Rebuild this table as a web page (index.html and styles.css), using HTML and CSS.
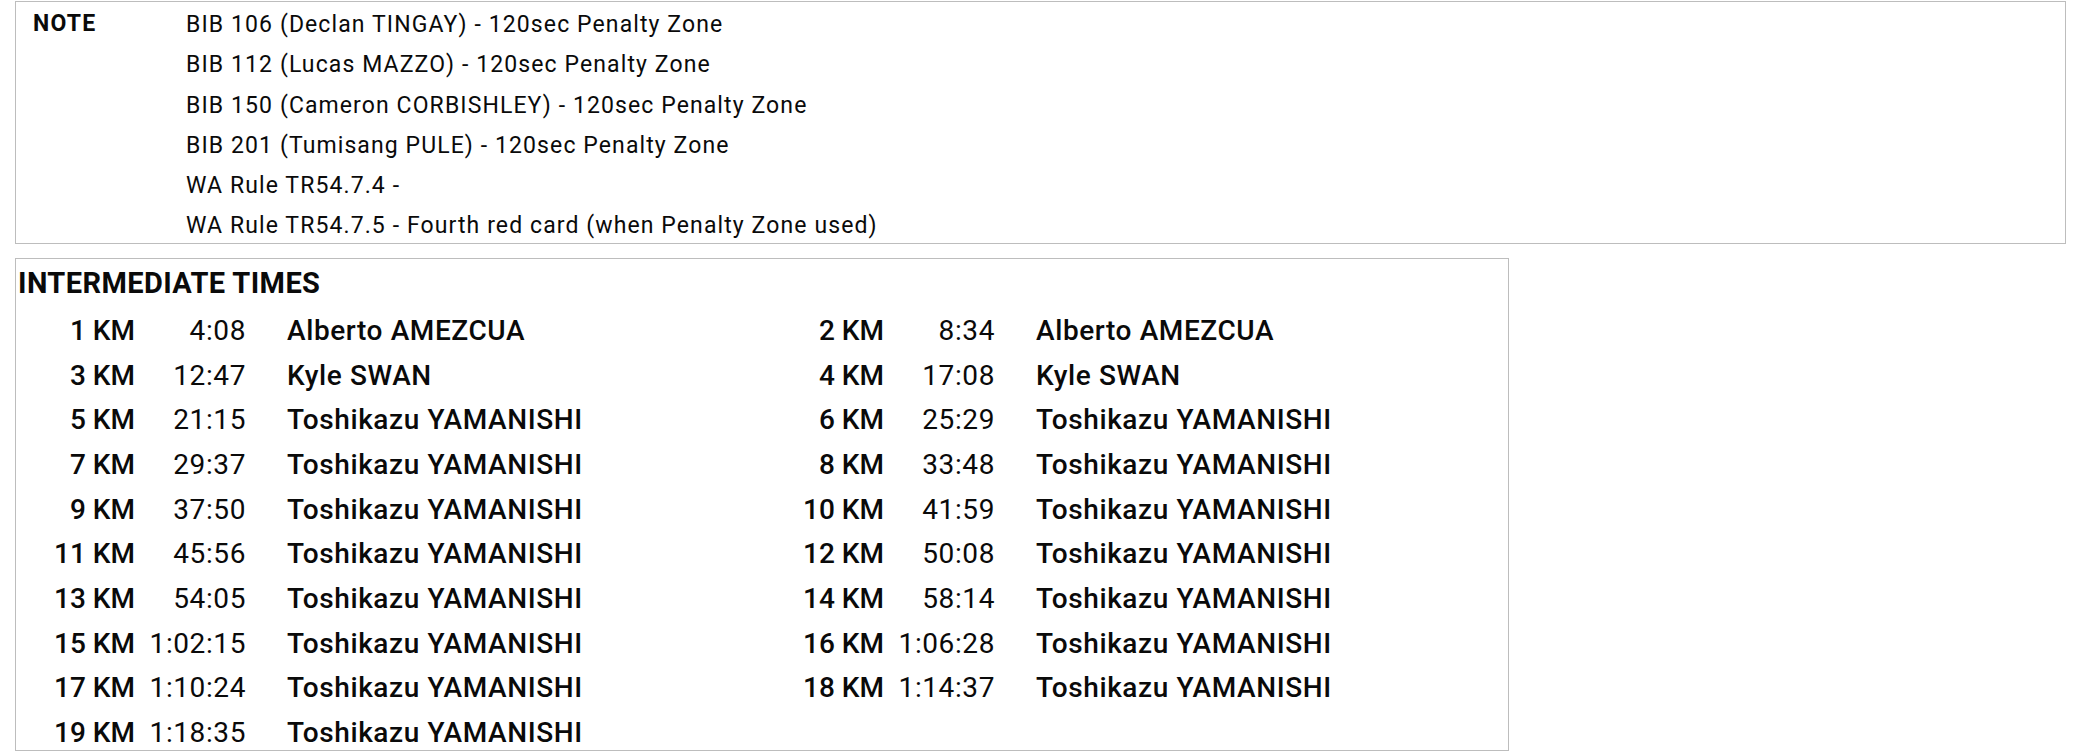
FILE: index.html
```html
<!DOCTYPE html>
<html>
<head>
<meta charset="utf-8">
<link rel="stylesheet" href="styles.css">
</head>
<body>
<div class="note-box">
  <div class="note-label">NOTE</div>
  <div class="note-lines">
    <div class="note-line">BIB 106 (Declan TINGAY) - 120sec Penalty Zone</div>
    <div class="note-line">BIB 112 (Lucas MAZZO) - 120sec Penalty Zone</div>
    <div class="note-line">BIB 150 (Cameron CORBISHLEY) - 120sec Penalty Zone</div>
    <div class="note-line">BIB 201 (Tumisang PULE) - 120sec Penalty Zone</div>
    <div class="note-line">WA Rule TR54.7.4 -</div>
    <div class="note-line">WA Rule TR54.7.5 - Fourth red card (when Penalty Zone used)</div>
  </div>
</div>
<div class="inter-box">
  <div class="inter-title">INTERMEDIATE TIMES</div>
  <div class="inter-grid">
    <div class="km">1 KM</div><div class="time">4:08</div><div class="name">Alberto AMEZCUA</div>
    <div class="km">2 KM</div><div class="time">8:34</div><div class="name">Alberto AMEZCUA</div>
    <div class="km">3 KM</div><div class="time">12:47</div><div class="name">Kyle SWAN</div>
    <div class="km">4 KM</div><div class="time">17:08</div><div class="name">Kyle SWAN</div>
    <div class="km">5 KM</div><div class="time">21:15</div><div class="name">Toshikazu YAMANISHI</div>
    <div class="km">6 KM</div><div class="time">25:29</div><div class="name">Toshikazu YAMANISHI</div>
    <div class="km">7 KM</div><div class="time">29:37</div><div class="name">Toshikazu YAMANISHI</div>
    <div class="km">8 KM</div><div class="time">33:48</div><div class="name">Toshikazu YAMANISHI</div>
    <div class="km">9 KM</div><div class="time">37:50</div><div class="name">Toshikazu YAMANISHI</div>
    <div class="km">10 KM</div><div class="time">41:59</div><div class="name">Toshikazu YAMANISHI</div>
    <div class="km">11 KM</div><div class="time">45:56</div><div class="name">Toshikazu YAMANISHI</div>
    <div class="km">12 KM</div><div class="time">50:08</div><div class="name">Toshikazu YAMANISHI</div>
    <div class="km">13 KM</div><div class="time">54:05</div><div class="name">Toshikazu YAMANISHI</div>
    <div class="km">14 KM</div><div class="time">58:14</div><div class="name">Toshikazu YAMANISHI</div>
    <div class="km">15 KM</div><div class="time">1:02:15</div><div class="name">Toshikazu YAMANISHI</div>
    <div class="km">16 KM</div><div class="time">1:06:28</div><div class="name">Toshikazu YAMANISHI</div>
    <div class="km">17 KM</div><div class="time">1:10:24</div><div class="name">Toshikazu YAMANISHI</div>
    <div class="km">18 KM</div><div class="time">1:14:37</div><div class="name">Toshikazu YAMANISHI</div>
    <div class="km">19 KM</div><div class="time">1:18:35</div><div class="name">Toshikazu YAMANISHI</div>
  </div>
</div>
</body>
</html>
```

FILE: styles.css
```css
html, body {
  margin: 0;
  padding: 0;
  background: #ffffff;
}
body {
  font-family: Roboto, "Liberation Sans", sans-serif;
  color: #0a0a0a;
  padding: 1px 0 0 15px;
}
.note-box {
  width: 2049px;
  height: 241px;
  border: 1px solid #bdbdbd;
  display: flex;
  box-sizing: content-box;
}
.note-label {
  width: 153px;
  padding-left: 17px;
  padding-top: 8px;
  font-weight: 700;
  font-size: 23px;
  letter-spacing: 1.2px;
  line-height: 28px;
}
.note-lines {
  padding-top: 9px;
}
.note-line {
  font-size: 23px;
  letter-spacing: 1.1px;
  line-height: 40.3px;
  height: 40.3px;
  display: flex;
  align-items: center;
  margin-top: -6px;
  margin-bottom: 6px;
}
.inter-box {
  margin-top: 14px;
  width: 1492px;
  height: 491px;
  border: 1px solid #bdbdbd;
}
.inter-title {
  font-weight: 700;
  font-size: 29px;
  letter-spacing: 0.4px;
  line-height: 28px;
  padding: 10px 0 0 2px;
  height: 30px;
}
.inter-grid {
  display: grid;
  margin-top: 9px;
  grid-template-columns: 119px 111px 519px 119px 111px 1fr;
  grid-auto-rows: 44.7px;
  font-size: 28px;
  letter-spacing: 0.6px;
  font-weight: 500;
  align-items: center;
}
.km {
  text-align: right;
  letter-spacing: 0;
}
.time {
  text-align: right;
  font-weight: 400;
}
.name {
  padding-left: 41px;
}
```
